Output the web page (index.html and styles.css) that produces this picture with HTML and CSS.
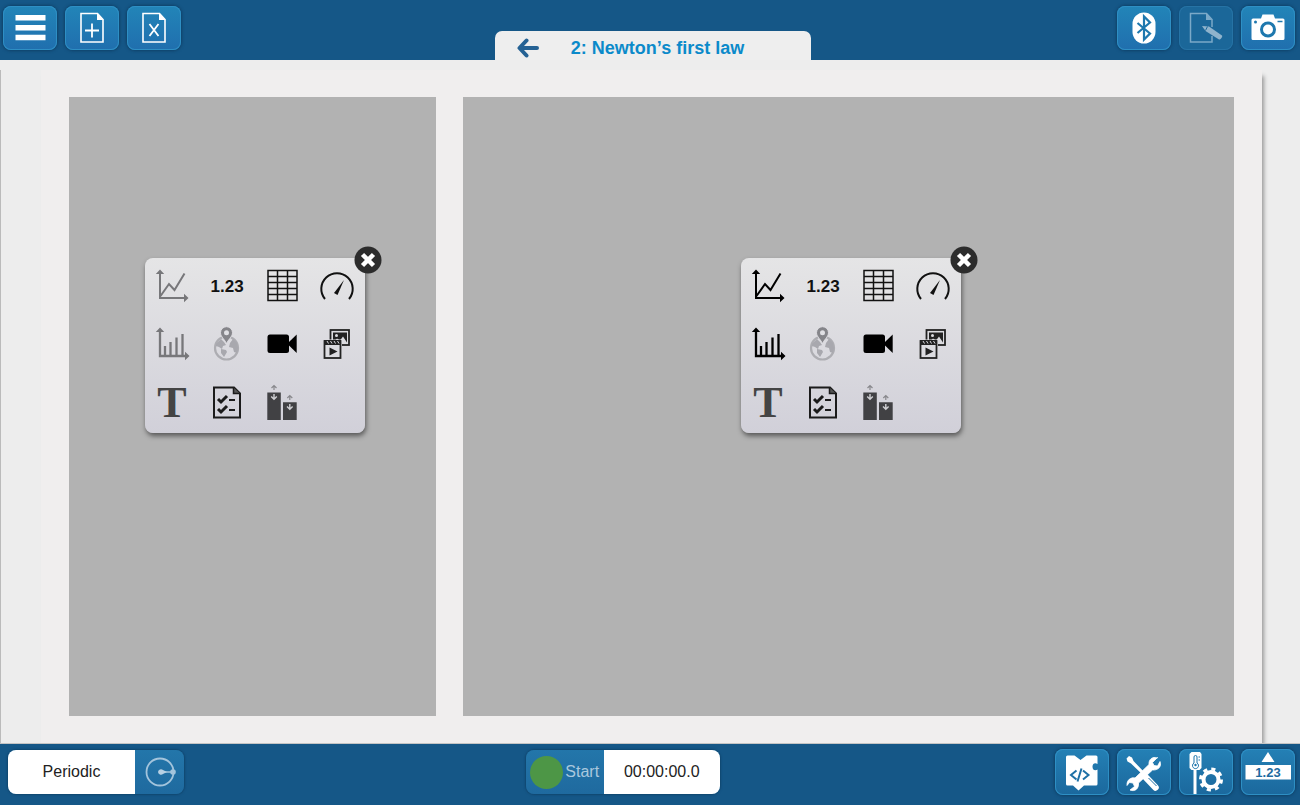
FILE: index.html
```html
<!DOCTYPE html>
<html lang="en">
<head>
  <meta charset="UTF-8">
  <meta name="viewport" content="width=device-width, initial-scale=1.0">
  <title>Newton's first law</title>
  <link rel="stylesheet" href="styles.css">
</head>
<body>
  <!-- shared icons -->
  <svg class="sprite" aria-hidden="true">
    <symbol id="i-page" viewBox="0 0 54 44">
      <path d="M16 7.500h16.500l5.500 6v22.500h-22z" fill="none" stroke="currentColor" stroke-width="1.600"/>
      <path d="M32 7l6.500 7h-6.500z" fill="currentColor"/>
    </symbol>
    <symbol id="i-graph" viewBox="0 0 55 58">
      <path d="M15 14v26h25M15.500 38l8.500-12 5.500 6 10-16.500" fill="none" stroke="currentColor" stroke-width="2"/>
      <path d="M15 11.500l4.200 4.500h-8.400zM43.500 40l-4.500-4.200v8.400z" fill="currentColor"/>
    </symbol>
    <symbol id="i-histogram" viewBox="0 0 55 58">
      <path d="M15 14v26h26M20 40V30M25.500 40V26M31.500 40V21.500M37.500 40V18" fill="none" stroke="currentColor" stroke-width="2.300"/>
      <path d="M15 11.500l4.200 4.500h-8.400zM44.500 40l-4.500-4.200v8.400z" fill="currentColor"/>
    </symbol>
    <symbol id="i-table" viewBox="0 0 55 58">
      <path d="M13 12.500h29v30h-29zM22.500 12.500v30M32.500 12.500v30M13 18.500h29M13 24.500h29M13 30.500h29M13 36.500h29" fill="none" stroke="#111" stroke-width="1.500"/>
    </symbol>
    <symbol id="i-meter" viewBox="0 0 55 58">
      <path d="M15 41a15.700 15.700 0 1 1 24 0" fill="none" stroke="#111" stroke-width="2"/>
      <path d="M34 22l-6.500 15-3.500-2z" fill="#111"/>
    </symbol>
    <symbol id="i-map" viewBox="0 0 55 58">
      <circle cx="26.500" cy="32" r="11.500" fill="none" stroke="#adadb2" stroke-width="2.200"/>
      <path d="M16 28l5-5 3 3 2 3-3 1-1 3-3-2-3-1zM21 33l5 1 1 2-3 5-3-4zM30 27l3-4 4 4 1 5-1 5-3-1-1-4-4-1z" fill="#a8a8ae"/>
      <path d="M26.500 28c-1-4-6-7-6-11.300a6 6 0 0 1 12 0c0 4.300-5 7.300-6 11.300z" fill="#85858a" stroke="#dedde2"/>
      <circle cx="26.500" cy="16.700" r="2.500" fill="#e0e0e4"/>
    </symbol>
    <symbol id="i-video" viewBox="0 0 55 58">
      <rect x="12.500" y="18.500" width="21.500" height="18.500" rx="2.500"/>
      <path d="M34 26l7.700-7.500v18.500l-7.700-7.500z"/>
    </symbol>
    <symbol id="i-media" viewBox="0 0 55 58">
      <rect x="20.500" y="14" width="18.500" height="15" fill="#dcdce0" stroke="#222" stroke-width="1.800"/>
      <path d="M23 26.500v-10h14v10l-4-6-3 4-3-2z" fill="#222"/>
      <circle cx="26.500" cy="19.500" r="1.500" fill="#dcdce0"/>
      <rect x="13" y="23.500" width="19" height="20" fill="#dcdce0"/>
      <rect x="14.500" y="25" width="16" height="17" fill="none" stroke="#222" stroke-width="1.800"/>
      <path d="M14 24h17v5h-17z" fill="#222"/>
      <path d="M17 25l1.500 2.500M20.500 25l1.500 2.500M24 25l1.500 2.500M27.500 25l1.500 2.500" stroke="#dcdce0"/>
      <path d="M19.500 31.500l8 4-8 4z" fill="#222"/>
    </symbol>
    <symbol id="i-checklist" viewBox="0 0 55 58">
      <path d="M14 13.500h20l6 6v24h-26z" fill="none" stroke="#1b1b1b" stroke-width="2"/>
      <path d="M33.500 13.500v6h6.500" fill="#555" stroke="#1b1b1b" stroke-width="1.500"/>
      <path d="M18 25l3 3 6-6M18 35l3 3 6-6" fill="none" stroke="#1b1b1b" stroke-width="3"/>
      <path d="M29 26h6M29 36h6" stroke="#1b1b1b" stroke-width="2"/>
    </symbol>
    <symbol id="i-bars" viewBox="0 0 55 58">
      <path d="M12.300 18.500h13.500v27.500h-13.500zM28 28.200h13.700v17.800h-13.700z" fill="#414144"/>
      <path d="M19 16v-3.500M16.500 14l2.500-2.500 2.500 2.500M34.800 26v-3.500M32.300 24l2.500-2.500 2.500 2.500" fill="none" stroke="#88888c" stroke-width="1.200"/>
      <path d="M19 20v4.500M16.200 22.500l2.800 2.800 2.800-2.800M34.800 30v4.500M32 32.500l2.800 2.800 2.800-2.800" fill="none" stroke="#d0d0d4" stroke-width="1.400"/>
    </symbol>
    <symbol id="i-close" viewBox="0 0 28 28">
      <circle cx="14" cy="14" r="13.500" fill="#2c2c2c"/>
      <path d="M8.500 8.500l11 11M19.500 8.500l-11 11" stroke="#fff" stroke-width="4.500"/>
    </symbol>
  </svg>

  <header class="topbar">
    <div class="group">
      <button class="tool" aria-label="Menu">
        <svg viewBox="0 0 54 44"><path d="M12.500 9h30v5.500h-30zM12.500 19h30v5.500h-30zM12.500 28.700h30v5.500h-30z" fill="#fff"/></svg>
      </button>
      <button class="tool" aria-label="Add page">
        <svg viewBox="0 0 54 44"><use href="#i-page"/><path d="M27 17.500v14M20 24.500h14" stroke="#fff" stroke-width="1.800"/></svg>
      </button>
      <button class="tool" aria-label="Delete page">
        <svg viewBox="0 0 54 44"><use href="#i-page"/><path d="M22.500 18l9 12M31.500 18l-9 12" stroke="#fff" stroke-width="1.800"/></svg>
      </button>
    </div>
    <nav class="tab">
      <button class="back" aria-label="Back">
        <svg viewBox="0 0 22 20"><path d="M20 10h-17M9.500 2.500l-7 7.500 7 7.500" fill="none" stroke="#256294" stroke-width="4" stroke-linecap="round" stroke-linejoin="round"/></svg>
      </button>
      <h1>2: Newton’s first law</h1>
    </nav>
    <div class="group right">
      <button class="tool" aria-label="Bluetooth">
        <svg viewBox="0 0 54 44">
          <rect x="15.500" y="6.500" width="23" height="31" rx="11.500" fill="#fff"/>
          <path d="M20.500 17l12.500 10.500-6 6v-23l6 6-12.500 10.500" fill="none" stroke="#1e78ae" stroke-width="2.200"/>
        </svg>
      </button>
      <button class="tool" aria-label="Edit page" disabled>
        <svg viewBox="0 0 54 44">
          <path d="M33 21v-7.500l-5.500-6h-16v28.500h21.500v-6" fill="none" stroke="#7ba9c8" stroke-width="1.500"/>
          <path d="M27 7l6.500 7h-6.500z" fill="#7ba9c8"/>
          <path d="M23 20l7 .500 13 9c1 1-1.500 4.500-3 4l-13.500-8.500z" fill="#8fb3cc"/>
          <path d="M28.500 20.500l-2 4" stroke="#1b6799"/>
        </svg>
      </button>
      <button class="tool" aria-label="Snapshot">
        <svg viewBox="0 0 54 44">
          <path d="M12 12.500h8l1.500-4h11l1.500 4h8q1.500 0 1.500 1.500v18.500q0 1.500-1.500 1.500h-30q-1.500 0-1.500-1.500v-18.500q0-1.500 1.500-1.500z" fill="#fff"/>
          <circle cx="27" cy="23.500" r="6.500" fill="none" stroke="#1e78ae" stroke-width="3"/>
          <circle cx="14.500" cy="16" r="1.500" fill="#1e78ae"/>
          <path d="M36.500 15.500h5" stroke="#1e78ae" stroke-width="1.500"/>
        </svg>
      </button>
    </div>
  </header>

  <main class="stage">
    <div class="sheet">
      <section class="panel">
        <div class="picker">
          <button class="dim" aria-label="Graph"><svg><use href="#i-graph"/></svg></button>
          <button class="digits">1.23</button>
          <button aria-label="Table"><svg><use href="#i-table"/></svg></button>
          <button aria-label="Meter"><svg><use href="#i-meter"/></svg></button>
          <button class="dim" aria-label="Histogram"><svg><use href="#i-histogram"/></svg></button>
          <button aria-label="Map"><svg><use href="#i-map"/></svg></button>
          <button aria-label="Video"><svg><use href="#i-video"/></svg></button>
          <button aria-label="Media"><svg><use href="#i-media"/></svg></button>
          <button class="letter">T</button>
          <button aria-label="Assessment"><svg><use href="#i-checklist"/></svg></button>
          <button aria-label="Bars"><svg><use href="#i-bars"/></svg></button>
          <button class="close" aria-label="Close"><svg><use href="#i-close"/></svg></button>
        </div>
      </section>
      <section class="panel">
        <div class="picker">
          <button aria-label="Graph"><svg><use href="#i-graph"/></svg></button>
          <button class="digits">1.23</button>
          <button aria-label="Table"><svg><use href="#i-table"/></svg></button>
          <button aria-label="Meter"><svg><use href="#i-meter"/></svg></button>
          <button aria-label="Histogram"><svg><use href="#i-histogram"/></svg></button>
          <button aria-label="Map"><svg><use href="#i-map"/></svg></button>
          <button aria-label="Video"><svg><use href="#i-video"/></svg></button>
          <button aria-label="Media"><svg><use href="#i-media"/></svg></button>
          <button class="letter">T</button>
          <button aria-label="Assessment"><svg><use href="#i-checklist"/></svg></button>
          <button aria-label="Bars"><svg><use href="#i-bars"/></svg></button>
          <button class="close" aria-label="Close"><svg><use href="#i-close"/></svg></button>
        </div>
      </section>
    </div>
  </main>

  <footer class="bottombar">
    <div class="pill mode">
      <button class="value">Periodic</button>
      <button class="action" aria-label="Sampling options">
        <svg width="34" height="34" viewBox="0 0 34 34">
          <circle cx="17" cy="17" r="13.500" fill="none" stroke="#a3c4dc" stroke-width="1.800"/>
          <path d="M17 17h13" stroke="#a3c4dc" stroke-width="1.500"/>
          <path d="M15 17a3 3 0 0 1 5-2l4 2-4 2a3 3 0 0 1-5-2z" fill="#b6d0e3"/>
          <circle cx="30" cy="17" r="2.800" fill="#a3c4dc"/>
        </svg>
      </button>
    </div>
    <div class="pill">
      <button class="action start"><span class="dot"></span>Start</button>
      <output class="value time">00:00:00.0</output>
    </div>
    <div class="group right">
      <button class="tool tall" aria-label="Blockly code">
        <svg viewBox="0 0 54 46">
          <path d="M11 8q0-1.500 1.500-1.500h7l6 4.500 6-4.500h9.500q1.500 0 1.500 1.500v7c-2-1.500-5 -1-5 2.700s3 4.300 5 2.800v14.500q0 1.500-1.500 1.500h-12l-5.500 5-5.500-5h-5.500q-1.500 0-1.500-1.500z" fill="#fff"/>
          <path d="M21.500 21.500l-5.500 4.500 5.500 4.500M28 21.500l5.500 4.500-5.500 4.500M26.500 19.500l-4 13" fill="none" stroke="#1d70a6" stroke-width="2"/>
        </svg>
      </button>
      <button class="tool tall" aria-label="Tools">
        <svg viewBox="0 0 54 46">
          <path d="M12 7l3 1.500 1.500 3.500 12 12.500-2 2-12.500-12-3.500-2-1-3z" fill="#fff"/>
          <path d="M29 28.500l9.500 10" stroke="#fff" stroke-width="6.500" stroke-linecap="round"/>
          <path d="M31.500 29l8 8" stroke="#1d70a6"/>
          <path d="M40.500 8.500l-5 5 1.500 3 3.500.500 2.500-4.500c2 5-2 9-7.500 8.500l-14 13c.500 6-4 9-8.500 7l4.500-3.500-1.500-3.500-3.500-.500-2.500 3c-.500-5.500 4-8.500 8-7.500l14-13.500c-.500-5 3.500-8.500 8.500-6.500z" fill="#fff" stroke="#fff" stroke-width=".800"/>
        </svg>
      </button>
      <button class="tool tall" aria-label="Sensor setup">
        <svg viewBox="0 0 54 46">
          <path d="M12.500 3h8.500l1.500 2v14l-2 2h-3v24h-3v-24h-2l-2-2v-14z" fill="#fff"/>
          <path d="M15 14v-6a1.500 1.500 0 0 1 3 0v6a3 3 0 1 1-3 0zM19.500 8h1.500M19.500 11h1.500" fill="none" stroke="#1d75ac"/>
          <circle cx="16.500" cy="16" r="1.200" fill="#1d75ac"/>
          <circle cx="32" cy="30.500" r="10.500" fill="none" stroke="#fff" stroke-width="3" stroke-dasharray="4.120"/>
          <circle cx="32" cy="30.500" r="7.500" fill="none" stroke="#fff" stroke-width="4"/>
        </svg>
      </button>
      <button class="tool tall" aria-label="Digits readout">
        <svg viewBox="0 0 54 46">
          <path d="M27 3l6.500 10h-13zM4.500 16h45.500v14.500h-45.500z" fill="#fff"/>
          <text class="readout" x="27" y="28" text-anchor="middle">1.23</text>
        </svg>
      </button>
    </div>
  </footer>
</body>
</html>
```
FILE: styles.css
```css
* {
  box-sizing: border-box;
}

body {
  margin: 0;
  min-height: 100vh;
  display: flex;
  flex-direction: column;
  font-family: "Liberation Sans", Arial, sans-serif;
  font-size: 16px;
  background-color: #eeecec;
}

button {
  margin: 0;
  padding: 0;
  border: none;
  background: none;
  font: inherit;
  color: inherit;
  cursor: pointer;
}

svg {
  display: block;
}

.sprite {
  position: absolute;
  width: 0;
  height: 0;
}

/* Bars */
.topbar, .bottombar {
  display: grid;
  background-color: #155787;
}

.topbar {
  height: 60px;
  grid-template-columns: 64fr 316px 63fr;
  padding: 0 5px 0 3px;
}

.bottombar {
  height: 61px;
  grid-template-columns: 9fr 194px 10fr;
  align-items: center;
  padding: 0 5px 5px 8px;
}

.group {
  display: flex;
  align-items: center;
  gap: 8px;
}

.topbar .group {
  padding-bottom: 4px;
}

.right {
  justify-content: flex-end;
}

.tool {
  width: 54px;
  height: 44px;
  color: #fff;
  border-radius: 8px;
  background: linear-gradient(#2285b8, #206fae);
  box-shadow: inset 0 0 0 1px #2e8fc4, 0 0 3px 1px #0f4168;
}

.tool svg {
  width: 100%;
  height: 100%;
}

.tool:disabled {
  background: #1b6799;
  box-shadow: inset 0 0 0 1px #2673a5, 0 0 3px #114a74;
}

.tall {
  height: 46px;
  background: linear-gradient(#2480b5, #1b689d);
}

.readout {
  font-size: 13px;
  font-weight: bold;
  fill: #1d6ba1;
}

/* Page tab */
.tab {
  align-self: end;
  display: flex;
  align-items: center;
  height: 29px;
  padding: 5px 22px 0;
  border-radius: 7px 7px 0 0;
  background-color: #eeeeee;
}

.back {
  width: 22px;
  height: 20px;
  margin-right: 32px;
}

h1 {
  margin: 0;
  font-size: 18px;
  line-height: 20px;
  color: #0b8aca;
}

/* Work area */
.stage {
  flex: 1;
  display: flex;
  padding: 10px 38px 0 41px;
  background: linear-gradient(#bbb, #bbb) 0 10px / 1px 100% no-repeat, #ededed;
  border-bottom: 1px solid #c4c4c4;
  overflow: hidden;
}

.sheet {
  flex: 1;
  display: grid;
  grid-template-columns: 10fr 21fr;
  gap: 27px;
  padding: 27px 28px;
  background-color: #f0eeee;
  box-shadow: 3px 5px 4px -1px #999;
}

.panel {
  display: flex;
  justify-content: center;
  align-items: flex-start;
  padding: 161px 0 24px 4px;
  background-color: #b2b2b2;
}

.picker {
  position: relative;
  display: grid;
  grid-template-columns: repeat(4, 55px);
  grid-auto-rows: 58px;
  height: 175px;
  border-radius: 8px;
  background: linear-gradient(#e5e5e6, #d1d0d9);
  box-shadow: 1px 3px 5px rgba(0, 0, 0, 0.5);
}

.picker svg {
  width: 100%;
  height: 100%;
}

.dim {
  color: #77777a;
}

.digits {
  font-size: 17px;
  font-weight: bold;
  line-height: 54px;
  color: #111;
}

.letter {
  font-family: "Liberation Serif", "Times New Roman", serif;
  font-size: 44px;
  font-weight: bold;
  line-height: 58px;
  color: #444;
}

.close {
  position: absolute;
  top: -12px;
  right: -17px;
  width: 28px;
  height: 28px;
}

/* Sampling controls */
.pill {
  display: flex;
  height: 44px;
  border-radius: 8px;
  overflow: hidden;
  background: linear-gradient(#2376aa, #1f6a9f);
  box-shadow: 0 0 2px 1px #10466f;
}

.mode {
  width: 176px;
}

.value {
  flex: 1;
  line-height: 44px;
  text-align: center;
  color: #222;
  background-color: #fff;
}

.action {
  display: flex;
  align-items: center;
  justify-content: center;
  width: 49px;
}

.start {
  width: 78px;
  gap: 2px;
  color: #a9c8de;
}

.dot {
  width: 33px;
  height: 33px;
  border-radius: 50%;
  background-color: #4d9646;
}
```
